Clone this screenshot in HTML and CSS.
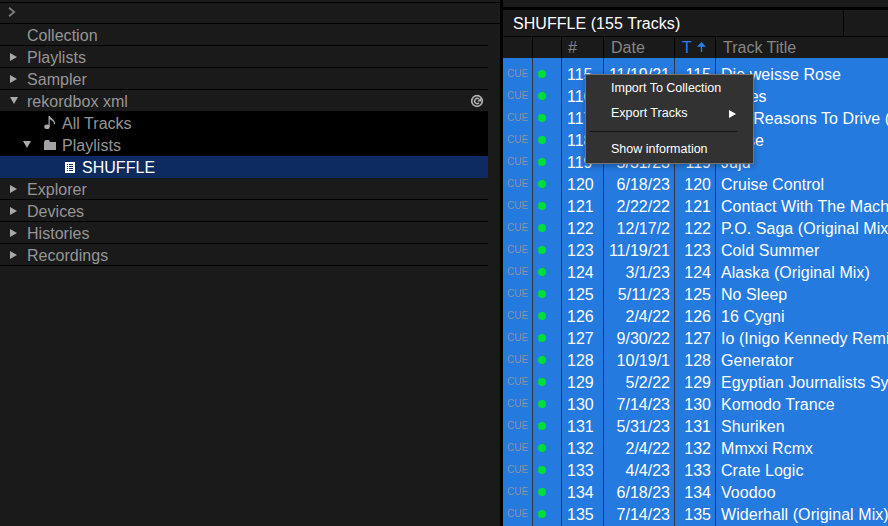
FILE: index.html
```
<!DOCTYPE html>
<html lang="en">
<head>
<meta charset="utf-8">
<title>Library</title>
<link rel="stylesheet" href="styles.css">
</head>
<body>
<div class="app">
  <aside class="sidebar">
    <div class="strip"></div>
    <div class="crumb"><svg width="8" height="10" viewBox="0 0 8 10"><path d="M1 .8L6.2 5L1 9.2" fill="none" stroke="#7c7c7c" stroke-width="1.8"/></svg></div>
    <nav class="tree">
      <div class="node"><span class="tw"></span>Collection</div>
      <div class="node"><span class="tw"><i class="right"></i></span>Playlists</div>
      <div class="node"><span class="tw"><i class="right"></i></span>Sampler</div>
      <div class="node open"><span class="tw"><i class="down"></i></span>rekordbox xml
        <svg class="reload" width="14" height="14" viewBox="0 0 14 14"><g fill="none" stroke="#b4b4b4"><circle cx="7" cy="7" r="5.3" stroke-width="1.7"/><path d="M9 8.9A2.6 2.6 0 1 1 9 5.1" stroke-width="1.5"/></g><path d="M7 7.6H11V4Z" fill="#b4b4b4"/></svg>
      </div>
      <div class="node child"><svg class="note" width="13" height="15" viewBox="0 0 13 15"><ellipse cx="3" cy="11.8" rx="2.7" ry="2.3" fill="#aaa"/><path d="M5.1 12V1.2C6 4 11 4.5 10.4 9.2M5.4 3.2C7 5 9.5 5 10.6 7.5" fill="none" stroke="#aaa" stroke-width="1.2"/></svg>All Tracks</div>
      <div class="node child sub"><i class="down"></i><svg class="folder" width="12" height="10" viewBox="0 0 12 10"><path d="M0 10V2L1.4 0H5L6 2H12V10Z" fill="#a3a3a3"/></svg>Playlists</div>
      <div class="node selected"><svg class="list" width="10" height="11" viewBox="0 0 10 11"><path d="M0 0H10V11H0Z" fill="#fff"/><path d="M2 2.5H3M4 2.5H8M2 4.5H3M4 4.5H8M2 6.5H3M4 6.5H8M2 8.5H3M4 8.5H8" stroke="#0d2b60"/></svg>SHUFFLE</div>
      <div class="node"><span class="tw"><i class="right"></i></span>Explorer</div>
      <div class="node"><span class="tw"><i class="right"></i></span>Devices</div>
      <div class="node"><span class="tw"><i class="right"></i></span>Histories</div>
      <div class="node"><span class="tw"><i class="right"></i></span>Recordings</div>
    </nav>
  </aside>
  <main class="panel">
    <div class="top"></div>
    <header class="title"><h1>SHUFFLE (155 Tracks)</h1><span class="search"></span></header>
    <div class="row head"><span></span><span></span><span>#</span><span>Date</span><span class="sort">T<svg width="9" height="10" viewBox="0 0 9 10"><path d="M0 4.8L4.5 0L9 4.8Z M3.8 4H5.2V10H3.8Z" fill="#2880e4"/></svg></span><span>Track Title</span></div>
    <div class="tracks">
      <div class="row gap"><span></span><span></span><span></span><span></span><span></span><span></span></div>
      <div class="row"><span>CUE</span><span></span><span>115</span><span>11/19/21</span><span>115</span><span>Die weisse Rose</span></div>
      <div class="row"><span>CUE</span><span></span><span>116</span><span>5/31/23</span><span>116</span><span>Bones</span></div>
      <div class="row"><span>CUE</span><span></span><span>117</span><span>5/31/23</span><span>117</span><span>The Reasons To Drive (Original Mix)</span></div>
      <div class="row"><span>CUE</span><span></span><span>118</span><span>5/31/23</span><span>118</span><span>Horse</span></div>
      <div class="row"><span>CUE</span><span></span><span>119</span><span>5/31/23</span><span>119</span><span>Juju</span></div>
      <div class="row"><span>CUE</span><span></span><span>120</span><span>6/18/23</span><span>120</span><span>Cruise Control</span></div>
      <div class="row"><span>CUE</span><span></span><span>121</span><span>2/22/22</span><span>121</span><span>Contact With The Machine</span></div>
      <div class="row"><span>CUE</span><span></span><span>122</span><span>12/17/2</span><span>122</span><span>P.O. Saga (Original Mix)</span></div>
      <div class="row"><span>CUE</span><span></span><span>123</span><span>11/19/21</span><span>123</span><span>Cold Summer</span></div>
      <div class="row"><span>CUE</span><span></span><span>124</span><span>3/1/23</span><span>124</span><span>Alaska (Original Mix)</span></div>
      <div class="row"><span>CUE</span><span></span><span>125</span><span>5/11/23</span><span>125</span><span>No Sleep</span></div>
      <div class="row"><span>CUE</span><span></span><span>126</span><span>2/4/22</span><span>126</span><span>16 Cygni</span></div>
      <div class="row"><span>CUE</span><span></span><span>127</span><span>9/30/22</span><span>127</span><span>Io (Inigo Kennedy Remix)</span></div>
      <div class="row"><span>CUE</span><span></span><span>128</span><span>10/19/1</span><span>128</span><span>Generator</span></div>
      <div class="row"><span>CUE</span><span></span><span>129</span><span>5/2/22</span><span>129</span><span>Egyptian Journalists Syndicate</span></div>
      <div class="row"><span>CUE</span><span></span><span>130</span><span>7/14/23</span><span>130</span><span>Komodo Trance</span></div>
      <div class="row"><span>CUE</span><span></span><span>131</span><span>5/31/23</span><span>131</span><span>Shuriken</span></div>
      <div class="row"><span>CUE</span><span></span><span>132</span><span>2/4/22</span><span>132</span><span>Mmxxi Rcmx</span></div>
      <div class="row"><span>CUE</span><span></span><span>133</span><span>4/4/23</span><span>133</span><span>Crate Logic</span></div>
      <div class="row"><span>CUE</span><span></span><span>134</span><span>6/18/23</span><span>134</span><span>Voodoo</span></div>
      <div class="row"><span>CUE</span><span></span><span>135</span><span>7/14/23</span><span>135</span><span>Widerhall (Original Mix)</span></div>
    </div>
  </main>
  <div class="menu">
    <div class="item">Import To Collection</div>
    <div class="item">Export Tracks<i class="arrow"></i></div>
    <div class="rule"></div>
    <div class="item">Show information</div>
  </div>
</div>
</body>
</html>
```
FILE: styles.css
```
* { box-sizing: border-box; }
body { margin: 0; background: #000; font: 16px/22px "Liberation Sans", Arial, sans-serif; }
svg { display: block; flex: none; }
.app { position: relative; display: flex; gap: 3px; width: 888px; height: 526px; overflow: hidden; }

.sidebar { width: 500px; background: #1a1a1a; color: #969696; letter-spacing: .03px; }
.strip { height: 3px; border-bottom: 1px solid #000; }
.crumb { height: 21px; padding: 4px 0 0 8px; border-bottom: 1px solid #000; }
.tree { width: 488px; }
.node { display: flex; align-items: center; height: 22px; border-bottom: 1px solid #000; white-space: nowrap; line-height: 21px; padding-top: 1px; }
.node.open { height: 21px; border-bottom: 0; }
.tw { width: 27px; padding-left: 10px; flex: none; }
.right, .down { display: block; flex: none; width: 0; height: 0; }
.right { border: solid transparent; border-width: 4px 0 4px 7px; border-left-color: #aaa; }
.down { border: solid transparent; border-width: 7px 4px 0; border-top-color: #aaa; margin-top: -2px; }
.reload { margin: 0 4px 0 auto; }
.child { height: 23px; background: #000; border-bottom: 0; padding-left: 44px; padding-top: 1px; }
.note { margin: -1px 5px 0 0; }
.sub { height: 22px; padding-left: 23px; }
.sub .down { margin-top: -2px; }
.folder { margin: -1px 6px 0 13px; }
.selected { height: 22px; background: #0d2b60; border: 0; color: #fff; padding-left: 65px; }
.list { margin: -1px 7px 0 0; }

.panel { width: 385px; overflow: hidden; }
.top { height: 7px; background: #1a1a1a; }
.title { display: flex; height: 27px; margin-top: 3px; border-bottom: 1px solid #000; background: #1a1a1a; color: #fff; }
h1 { flex: none; width: 341px; margin: 0; padding-left: 10px; border-right: 1px solid #000; font-size: 16px; font-weight: 400; line-height: 27px; letter-spacing: .05px; }
.row { display: grid; grid-template-columns: 30px 29px 42px 71px 41px 300px; height: 22px; white-space: nowrap; color: #fff; }
.row > span { border-right: 1px solid #2f363d; overflow: hidden; }
.head { height: 21px; background: #1a1a1a; color: #858585; }
.head > span { border-color: #000; padding-left: 7px; }
.head > :nth-child(3) { padding-left: 6px; }
.head .sort { display: flex; gap: 5px; color: #2880e4; }
.sort svg { margin-top: 5px; }
.tracks { background: #247adf; line-height: 24px; }
.tracks .row:last-child { height: 23px; }
.tracks .gap { height: 5px; }
.tracks .row > :nth-child(1) { padding-left: 4px; font-size: 10px; line-height: 21px; color: #8b949c; }
.tracks .row:not(.gap) > :nth-child(2) { padding: 7px 0 0 5px; }
.tracks .row:not(.gap) > :nth-child(2)::before { content: ""; display: block; width: 8px; height: 8px; border-radius: 50%; background: #00df35; }
.tracks .row > :nth-child(3) { padding-left: 5px; }
.tracks .row > :nth-child(4) { text-align: right; padding-right: 4px; }
.tracks .row > :nth-child(5) { text-align: right; padding-right: 4px; }
.tracks .row > :nth-child(6) { padding-left: 5px; letter-spacing: .06px; }

.menu { position: absolute; left: 585px; top: 74px; width: 169px; height: 90px; background: #323232; border: 1px solid #77736e; box-shadow: 0 2px 6px rgba(0,0,0,.3); color: #fff; font-size: 12.5px; line-height: 25px; padding-top: 1px; }
.item { display: flex; align-items: center; justify-content: space-between; height: 25px; padding: 0 17px 0 25px; white-space: nowrap; }
.arrow { border: solid transparent; border-width: 4px 0 4px 7px; border-left-color: #fff; }
.rule { height: 1px; margin: 5px 16px 5px 4px; background: #141414; }
```
